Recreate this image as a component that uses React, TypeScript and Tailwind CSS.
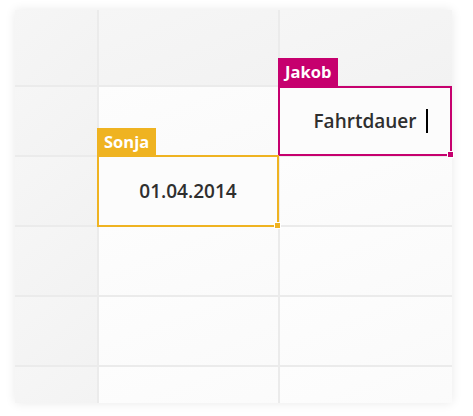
import React from 'react';

const ROWS = 6;

// Ein Feld, das gerade von einem Nutzer bearbeitet wird
const EditBox = ({
  name,
  color,
  text,
  caret,
  boxClass,
  labelClass,
}: {
  name: string;
  color: 'pink' | 'yellow';
  text: string;
  caret?: boolean;
  boxClass: string;
  labelClass: string;
}) => {
  const border = color === 'pink' ? 'border-[#c6006e]' : 'border-[#efb321]';
  const bg = color === 'pink' ? 'bg-[#c6006e]' : 'bg-[#efb321]';
  return (
    <>
      <div
        className={`absolute ${labelClass} ${bg} flex items-center pl-[7px] text-white font-bold text-[16.5px] leading-none`}
      >
        {name}
      </div>
      <div className={`absolute ${boxClass} border-2 ${border} bg-[#fcfcfc] flex items-center justify-center`}>
        <span className="relative text-[19px] font-semibold text-[#2f2f2f] leading-none">
          {text}
          {caret && <span className="absolute left-full ml-[9px] top-1/2 -translate-y-1/2 w-[2px] h-[24px] bg-black" />}
        </span>
        <span className={`absolute -right-[4px] -bottom-[4px] w-[7px] h-[7px] ${bg} border border-white`} />
      </div>
    </>
  );
};

export default function App() {
  return (
    <div className="w-[473px] h-[416px] bg-white pt-[10px] pl-[15px]" style={{ fontFamily: '"Open Sans", "Noto Sans", sans-serif' }}>
      <div className="relative w-[437px] h-[393px] shadow-[0_0_10px_rgba(0,0,0,0.09)]">
        <div className="w-full h-full overflow-hidden">
          <div className="grid grid-cols-[82px_179px_172px] grid-rows-[75px_68px_68px_68px_68px_68px] gap-[2px] bg-[#ebebeb]">
            {Array.from({ length: ROWS }).map((_, r) =>
              [0, 1, 2].map((c) => (
                <div
                  key={`${r}-${c}`}
                  className={
                    r === 0 || c === 0
                      ? 'bg-gradient-to-br from-[#f6f6f6] to-[#f2f2f2]'
                      : 'bg-gradient-to-br from-[#fdfdfd] to-[#fafafa]'
                  }
                />
              ))
            )}
          </div>
        </div>

        <EditBox
          name="Jakob"
          color="pink"
          text="Fahrtdauer"
          caret
          labelClass="left-[263px] top-[48px] w-[60px] h-[28px]"
          boxClass="left-[263px] top-[76px] w-[174px] h-[70px]"
        />
        <EditBox
          name="Sonja"
          color="yellow"
          text="01.04.2014"
          labelClass="left-[82px] top-[118px] w-[59px] h-[28px]"
          boxClass="left-[82px] top-[145px] w-[182px] h-[72px]"
        />
      </div>
    </div>
  );
}
